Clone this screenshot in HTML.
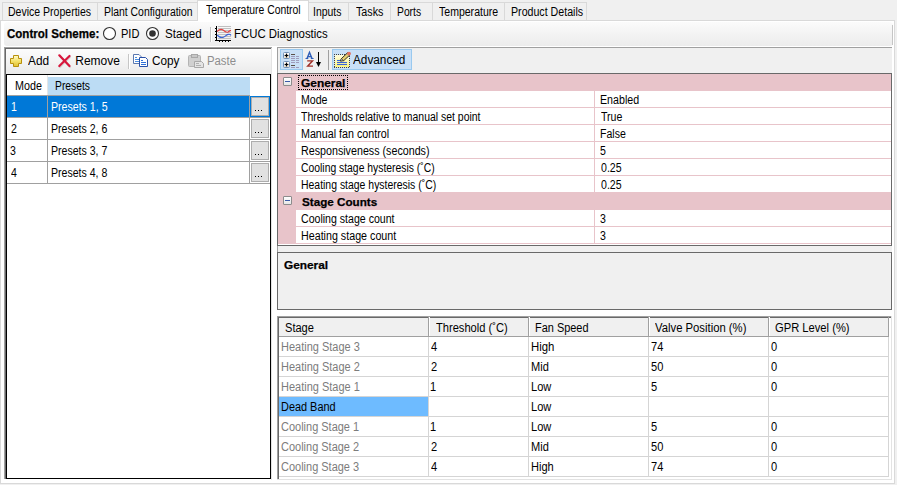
<!DOCTYPE html>
<html><head><meta charset="utf-8"><style>
html,body{margin:0;padding:0;width:897px;height:485px;overflow:hidden;background:#f0f0f0;position:relative}
body>div{position:absolute}
.t{font-family:"Liberation Sans",sans-serif;white-space:pre;transform-origin:0 0}
</style></head><body>
<div style="left:2px;top:2px;width:96px;height:19px;background:#f0f0f0;border:1px solid #d9d9d9;box-sizing:border-box;border-bottom:none"></div>
<div style="left:97px;top:2px;width:101px;height:19px;background:#f0f0f0;border:1px solid #d9d9d9;box-sizing:border-box;border-bottom:none"></div>
<div style="left:308px;top:2px;width:41px;height:19px;background:#f0f0f0;border:1px solid #d9d9d9;box-sizing:border-box;border-bottom:none"></div>
<div style="left:348px;top:2px;width:43px;height:19px;background:#f0f0f0;border:1px solid #d9d9d9;box-sizing:border-box;border-bottom:none"></div>
<div style="left:390px;top:2px;width:43px;height:19px;background:#f0f0f0;border:1px solid #d9d9d9;box-sizing:border-box;border-bottom:none"></div>
<div style="left:432px;top:2px;width:73px;height:19px;background:#f0f0f0;border:1px solid #d9d9d9;box-sizing:border-box;border-bottom:none"></div>
<div style="left:504px;top:2px;width:83px;height:19px;background:#f0f0f0;border:1px solid #d9d9d9;box-sizing:border-box;border-bottom:none"></div>
<div style="left:0px;top:20px;width:895px;height:464px;background:#fff;border:1px solid #d9d9d9;box-sizing:border-box"></div>
<div style="left:197px;top:0px;width:112px;height:21px;background:#fff;border:1px solid #d9d9d9;border-bottom:none;box-sizing:border-box"></div>
<div style="left:4px;top:22px;width:889px;height:24px;background:linear-gradient(#fbfbfb,#f3f3f3 50%,#ececec);border-radius:3px"></div>
<div style="left:892px;top:25px;width:1px;height:20px;background:#c5c5c5"></div>
<div style="left:210px;top:27px;width:1px;height:15px;background:#c6c6c6"></div>
<div style="left:211px;top:28px;width:1px;height:14px;background:#ffffff"></div>
<div style="left:4px;top:47px;width:268px;height:1px;background:#a0a0a0"></div>
<div style="left:4px;top:47px;width:1px;height:433px;background:#a0a0a0"></div>
<div style="left:5px;top:48px;width:266px;height:1px;background:#696969"></div>
<div style="left:5px;top:48px;width:1px;height:431px;background:#696969"></div>
<div style="left:4px;top:479px;width:269px;height:1px;background:#ffffff"></div>
<div style="left:271px;top:48px;width:1px;height:432px;background:#e3e3e3"></div>
<div style="left:6px;top:49px;width:265px;height:25px;background:linear-gradient(#fcfcfc,#f2f2f2 60%,#eaeaea)"></div>
<div style="left:128px;top:54px;width:1px;height:15px;background:#c6c6c6"></div>
<div style="left:129px;top:55px;width:1px;height:14px;background:#ffffff"></div>
<div style="left:6px;top:74px;width:265px;height:405px;background:#fff;border:1px solid #000;box-sizing:border-box"></div>
<div style="left:48px;top:77px;width:202px;height:18px;background:#bcdcf4"></div>
<div style="left:7px;top:95px;width:243px;height:1px;background:#a0a0a0"></div>
<div style="left:47px;top:75px;width:1px;height:20px;background:#e5e5e5"></div>
<div style="left:7px;top:96px;width:243px;height:21px;background:#0078d7"></div>
<div style="left:250px;top:96px;width:20px;height:21px;background:#0078d7"></div>
<div style="left:7px;top:117px;width:263px;height:1px;background:#a0a0a0"></div>
<div style="left:7px;top:139px;width:263px;height:1px;background:#a0a0a0"></div>
<div style="left:7px;top:161px;width:263px;height:1px;background:#a0a0a0"></div>
<div style="left:7px;top:183px;width:263px;height:1px;background:#a0a0a0"></div>
<div style="left:47px;top:96px;width:1px;height:88px;background:#a0a0a0"></div>
<div style="left:249px;top:96px;width:1px;height:88px;background:#a0a0a0"></div>
<div style="left:251px;top:97px;width:18px;height:19px;background:#e1e1e1;border:1px solid #adadad;box-sizing:border-box"></div>
<div style="left:255px;top:110px;width:1px;height:1px;background:#000"></div>
<div style="left:258px;top:110px;width:1px;height:1px;background:#000"></div>
<div style="left:261px;top:110px;width:1px;height:1px;background:#000"></div>
<div style="left:251px;top:119px;width:18px;height:19px;background:#e1e1e1;border:1px solid #adadad;box-sizing:border-box"></div>
<div style="left:255px;top:132px;width:1px;height:1px;background:#000"></div>
<div style="left:258px;top:132px;width:1px;height:1px;background:#000"></div>
<div style="left:261px;top:132px;width:1px;height:1px;background:#000"></div>
<div style="left:251px;top:141px;width:18px;height:19px;background:#e1e1e1;border:1px solid #adadad;box-sizing:border-box"></div>
<div style="left:255px;top:154px;width:1px;height:1px;background:#000"></div>
<div style="left:258px;top:154px;width:1px;height:1px;background:#000"></div>
<div style="left:261px;top:154px;width:1px;height:1px;background:#000"></div>
<div style="left:251px;top:163px;width:18px;height:19px;background:#e1e1e1;border:1px solid #adadad;box-sizing:border-box"></div>
<div style="left:255px;top:176px;width:1px;height:1px;background:#000"></div>
<div style="left:258px;top:176px;width:1px;height:1px;background:#000"></div>
<div style="left:261px;top:176px;width:1px;height:1px;background:#000"></div>
<div style="left:277px;top:47px;width:615px;height:263px;background:#f0f0f0"></div>
<div style="left:277px;top:47px;width:615px;height:1px;background:#a0a0a0"></div>
<div style="left:277px;top:47px;width:1px;height:263px;background:#a0a0a0"></div>
<div style="left:280px;top:49px;width:23px;height:21px;background:#c9e0f7;border:1px solid #99c9ef;box-sizing:border-box"></div>
<div style="left:328px;top:50px;width:1px;height:20px;background:#a0a0a0"></div>
<div style="left:332px;top:49px;width:80px;height:21px;background:#c9e0f7;border:1px solid #99c9ef;box-sizing:border-box"></div>
<div style="left:277px;top:73px;width:615px;height:173px;background:#e8c4ca;border:1px solid #696969;box-sizing:border-box"></div>
<div style="left:296px;top:91px;width:595px;height:16px;background:#fff"></div>
<div style="left:296px;top:108px;width:595px;height:16px;background:#fff"></div>
<div style="left:296px;top:125px;width:595px;height:16px;background:#fff"></div>
<div style="left:296px;top:142px;width:595px;height:16px;background:#fff"></div>
<div style="left:296px;top:159px;width:595px;height:16px;background:#fff"></div>
<div style="left:296px;top:176px;width:595px;height:16px;background:#fff"></div>
<div style="left:296px;top:210px;width:595px;height:16px;background:#fff"></div>
<div style="left:296px;top:227px;width:595px;height:16px;background:#fff"></div>
<div style="left:278px;top:244px;width:613px;height:1px;background:#ffffff"></div>
<div style="left:594px;top:91px;width:1px;height:16px;background:#e8c4ca"></div>
<div style="left:594px;top:108px;width:1px;height:16px;background:#e8c4ca"></div>
<div style="left:594px;top:125px;width:1px;height:16px;background:#e8c4ca"></div>
<div style="left:594px;top:142px;width:1px;height:16px;background:#e8c4ca"></div>
<div style="left:594px;top:159px;width:1px;height:16px;background:#e8c4ca"></div>
<div style="left:594px;top:176px;width:1px;height:16px;background:#e8c4ca"></div>
<div style="left:594px;top:210px;width:1px;height:16px;background:#e8c4ca"></div>
<div style="left:594px;top:227px;width:1px;height:16px;background:#e8c4ca"></div>
<div style="left:283px;top:77px;width:9px;height:9px;background:linear-gradient(#fff,#e6e6e6);border:1px solid #8c8c8c;border-radius:1px;box-sizing:border-box"></div>
<div style="left:285px;top:81px;width:5px;height:1px;background:#3a5aa8"></div>
<div style="left:283px;top:196px;width:9px;height:9px;background:linear-gradient(#fff,#e6e6e6);border:1px solid #8c8c8c;border-radius:1px;box-sizing:border-box"></div>
<div style="left:285px;top:200px;width:5px;height:1px;background:#3a5aa8"></div>
<div style="left:298px;top:75px;width:50px;height:15px;border:1px dotted #000;box-sizing:border-box"></div>
<div style="left:277px;top:252px;width:615px;height:58px;background:#f0f0f0;border:1px solid #696969;box-sizing:border-box"></div>
<div style="left:277px;top:316px;width:615px;height:164px;background:#fff"></div>
<div style="left:277px;top:316px;width:615px;height:1px;background:#a0a0a0"></div>
<div style="left:277px;top:316px;width:1px;height:164px;background:#a0a0a0"></div>
<div style="left:278px;top:317px;width:613px;height:1px;background:#696969"></div>
<div style="left:278px;top:317px;width:1px;height:162px;background:#696969"></div>
<div style="left:279px;top:318px;width:610px;height:18px;background:#f0f0f0"></div>
<div style="left:279px;top:336px;width:610px;height:1px;background:#a0a0a0"></div>
<div style="left:428px;top:317px;width:1px;height:19px;background:#a0a0a0"></div>
<div style="left:429px;top:317px;width:1px;height:19px;background:#ffffff"></div>
<div style="left:528px;top:317px;width:1px;height:19px;background:#a0a0a0"></div>
<div style="left:529px;top:317px;width:1px;height:19px;background:#ffffff"></div>
<div style="left:648px;top:317px;width:1px;height:19px;background:#a0a0a0"></div>
<div style="left:649px;top:317px;width:1px;height:19px;background:#ffffff"></div>
<div style="left:768px;top:317px;width:1px;height:19px;background:#a0a0a0"></div>
<div style="left:769px;top:317px;width:1px;height:19px;background:#ffffff"></div>
<div style="left:888px;top:317px;width:1px;height:20px;background:#a0a0a0"></div>
<div style="left:279px;top:356px;width:610px;height:1px;background:#d5d5d5"></div>
<div style="left:279px;top:376px;width:610px;height:1px;background:#d5d5d5"></div>
<div style="left:279px;top:396px;width:610px;height:1px;background:#d5d5d5"></div>
<div style="left:279px;top:416px;width:610px;height:1px;background:#d5d5d5"></div>
<div style="left:279px;top:436px;width:610px;height:1px;background:#d5d5d5"></div>
<div style="left:279px;top:456px;width:610px;height:1px;background:#d5d5d5"></div>
<div style="left:279px;top:476px;width:610px;height:1px;background:#d5d5d5"></div>
<div style="left:428px;top:337px;width:1px;height:140px;background:#d5d5d5"></div>
<div style="left:528px;top:337px;width:1px;height:140px;background:#d5d5d5"></div>
<div style="left:648px;top:337px;width:1px;height:140px;background:#d5d5d5"></div>
<div style="left:768px;top:337px;width:1px;height:140px;background:#d5d5d5"></div>
<div style="left:888px;top:337px;width:1px;height:140px;background:#d5d5d5"></div>
<div style="left:279px;top:397px;width:149px;height:19px;background:#6ebbff"></div>
<div style="left:277px;top:479px;width:615px;height:1px;background:#e3e3e3"></div>
<div style="left:891px;top:316px;width:1px;height:164px;background:#e3e3e3"></div>
<svg style="position:absolute;left:0;top:0" width="897" height="485" viewBox="0 0 897 485">
<defs>
<linearGradient id="gy" x1="0" y1="0" x2="0" y2="1"><stop offset="0" stop-color="#fffbd0"/><stop offset="0.5" stop-color="#f4e26a"/><stop offset="1" stop-color="#e0c030"/></linearGradient>
<linearGradient id="gtan" x1="0" y1="0" x2="0" y2="1"><stop offset="0" stop-color="#ffffff"/><stop offset="0.6" stop-color="#fdfbf7"/><stop offset="1" stop-color="#e0d0b4"/></linearGradient>
<linearGradient id="gnote" x1="0" y1="0" x2="0" y2="1"><stop offset="0" stop-color="#fffde0"/><stop offset="1" stop-color="#fff880"/></linearGradient>
</defs>
<!-- radio buttons -->
<circle cx="109.5" cy="33.5" r="6" fill="#fff" stroke="#333" stroke-width="1.1"/>
<circle cx="152.5" cy="33.5" r="6" fill="#fff" stroke="#333" stroke-width="1.1"/>
<circle cx="152.5" cy="33.5" r="3.3" fill="#333"/>
<!-- FCUC chart icon -->
<g>
<g stroke="#c0c0c0" stroke-width="1">
<line x1="218" y1="26.5" x2="231" y2="26.5"/><line x1="218" y1="28.5" x2="231" y2="28.5"/>
<line x1="218" y1="30.5" x2="231" y2="30.5"/><line x1="218" y1="32.5" x2="231" y2="32.5"/>
<line x1="218" y1="34.5" x2="231" y2="34.5"/><line x1="218" y1="36.5" x2="231" y2="36.5"/>
<line x1="218" y1="38.5" x2="231" y2="38.5"/>
</g>
<path d="M217,31.5 C219.5,29 221.5,28.8 223,30 C225,31.8 226.5,33 228,32 C229,31.3 230,30.6 231,30.4" fill="none" stroke="#e04040" stroke-width="1.2"/>
<path d="M217,35 C219,37 221,37.8 223,37.4 C225,37 226,35 228,34.4 C229.5,34 230.5,34.6 231,35.4" fill="none" stroke="#3a64d8" stroke-width="1.2"/>
<line x1="216.5" y1="26" x2="216.5" y2="41" stroke="#000" stroke-width="1"/>
<line x1="216" y1="40.5" x2="231" y2="40.5" stroke="#000" stroke-width="1"/>
<g fill="#000"><rect x="215" y="28" width="1" height="1"/><rect x="215" y="31" width="1" height="1"/><rect x="215" y="34" width="1" height="1"/><rect x="215" y="37" width="1" height="1"/><rect x="215" y="40" width="1" height="1"/>
<rect x="219" y="41" width="1" height="1"/><rect x="222" y="41" width="1" height="1"/><rect x="225" y="41" width="1" height="1"/><rect x="228" y="41" width="1" height="1"/></g>
</g>
<!-- Add (plus) icon -->
<path d="M13.5,55.5 H18.5 V58.5 H21.5 V63.5 H18.5 V66.5 H13.5 V63.5 H10.5 V58.5 H13.5 Z" fill="url(#gy)" stroke="#b8900c" stroke-width="1"/>
<!-- Remove (X) icon -->
<g stroke="#9a9a9a" stroke-opacity="0.3" stroke-width="2.2" stroke-linecap="round"><line x1="60" y1="56" x2="70" y2="67"/><line x1="70" y1="57" x2="60" y2="67"/></g>
<g stroke="#d8163c" stroke-width="2.2" stroke-linecap="round"><line x1="59.3" y1="55.3" x2="69.5" y2="66"/><line x1="69.5" y1="56" x2="59.3" y2="66"/></g>
<!-- Copy icon -->
<path d="M133.5,54.5 H139 L141.5,57 V63.5 H133.5 Z" fill="#fff" stroke="#5a78b0" stroke-width="1"/>
<g stroke="#4a8ee0" stroke-width="1"><line x1="135" y1="57.5" x2="137" y2="57.5"/><line x1="135" y1="59.5" x2="140" y2="59.5"/><line x1="135" y1="61.5" x2="140" y2="61.5"/></g>
<path d="M139.5,57.5 H145.5 L147.5,59.5 V66.5 H139.5 Z" fill="#fff" stroke="#2850a8" stroke-width="1"/>
<g stroke="#3070d8" stroke-width="1"><line x1="141" y1="60.5" x2="143" y2="60.5"/><line x1="141" y1="62.5" x2="146" y2="62.5"/><line x1="141" y1="64.5" x2="146" y2="64.5"/></g>
<!-- Paste icon (disabled) -->
<rect x="188.5" y="55.5" width="12" height="11" rx="1" fill="#d0d0d0" stroke="#b4b4b4"/>
<rect x="191.5" y="54.5" width="6" height="3" fill="#c8c8c8" stroke="#a8a8a8"/>
<path d="M194.5,61.5 H201.5 L203.5,63.5 V67.5 H194.5 Z" fill="#e4e4e4" stroke="#a8a8a8"/>
<g stroke="#b0b0b0"><line x1="196" y1="63.5" x2="199" y2="63.5"/><line x1="196" y1="65.5" x2="201" y2="65.5"/></g>
<!-- categorized icon -->
<g>
<rect x="283.5" y="52.5" width="6" height="6" rx="1" fill="url(#gtan)" stroke="#7090b8"/>
<rect x="283.5" y="61.5" width="6" height="6" rx="1" fill="url(#gtan)" stroke="#7090b8"/>
<g stroke="#000" stroke-width="1.2"><line x1="284.6" y1="55.5" x2="288.4" y2="55.5"/><line x1="286.5" y1="53.6" x2="286.5" y2="57.4"/>
<line x1="284.6" y1="64.5" x2="288.4" y2="64.5"/><line x1="286.5" y1="62.6" x2="286.5" y2="66.4"/></g>
<g stroke="#5a5048" stroke-width="1"><line x1="291" y1="54.5" x2="295" y2="54.5"/><line x1="291" y1="65.5" x2="295" y2="65.5"/></g>
<g stroke="#9a94b4" stroke-width="0.9">
<line x1="291" y1="56.5" x2="295" y2="56.5"/><line x1="296" y1="56.5" x2="299" y2="56.5"/>
<line x1="291" y1="58.5" x2="295" y2="58.5"/><line x1="296" y1="58.5" x2="299" y2="58.5"/>
<line x1="291" y1="60.5" x2="295" y2="60.5"/><line x1="296" y1="60.5" x2="299" y2="60.5"/>
<line x1="291" y1="62.5" x2="295" y2="62.5"/><line x1="296" y1="62.5" x2="299" y2="62.5"/>
<line x1="291" y1="67.5" x2="295" y2="67.5"/><line x1="296" y1="67.5" x2="299" y2="67.5"/>
</g>
</g>
<!-- AZ icon -->
<g fill="none" stroke="#2f5fb8" stroke-width="1.4"><path d="M306.8,59 L309.5,52.3 L312.2,59"/><line x1="307.8" y1="56.6" x2="311.2" y2="56.6"/></g>
<g stroke="#2f5fb8" stroke-width="1"><line x1="305.5" y1="58.5" x2="308.3" y2="58.5"/><line x1="310.8" y1="58.5" x2="313.6" y2="58.5"/></g>
<g fill="none" stroke="#a03028" stroke-width="1.3"><path d="M307.2,60.8 H312.6 L307.6,66.2 H313"/></g>
<line x1="318.5" y1="52" x2="318.5" y2="64" stroke="#000" stroke-width="1"/>
<path d="M316,62 L321,62 L318.5,67 Z" fill="#000"/>
<!-- Advanced icon -->
<rect x="335" y="55" width="14" height="12" fill="url(#gnote)"/>
<g fill="#404040"><rect x="334" y="54" width="1" height="1"/><rect x="334" y="67" width="1" height="1"/><rect x="336" y="54" width="1" height="1"/><rect x="336" y="67" width="1" height="1"/><rect x="338" y="54" width="1" height="1"/><rect x="338" y="67" width="1" height="1"/><rect x="340" y="54" width="1" height="1"/><rect x="340" y="67" width="1" height="1"/><rect x="342" y="54" width="1" height="1"/><rect x="342" y="67" width="1" height="1"/><rect x="344" y="54" width="1" height="1"/><rect x="344" y="67" width="1" height="1"/><rect x="346" y="54" width="1" height="1"/><rect x="346" y="67" width="1" height="1"/><rect x="348" y="54" width="1" height="1"/><rect x="348" y="67" width="1" height="1"/><rect x="334" y="56" width="1" height="1"/><rect x="349" y="56" width="1" height="1"/><rect x="334" y="58" width="1" height="1"/><rect x="349" y="58" width="1" height="1"/><rect x="334" y="60" width="1" height="1"/><rect x="349" y="60" width="1" height="1"/><rect x="334" y="62" width="1" height="1"/><rect x="349" y="62" width="1" height="1"/><rect x="334" y="64" width="1" height="1"/><rect x="349" y="64" width="1" height="1"/><rect x="334" y="66" width="1" height="1"/><rect x="349" y="66" width="1" height="1"/></g>
<g stroke="#3a64d8" stroke-width="1.1"><line x1="337" y1="60.5" x2="341" y2="60.5"/><line x1="337" y1="62.5" x2="347" y2="62.5"/><line x1="337" y1="64.5" x2="347" y2="64.5"/></g>
<path d="M340.5,61 L341.5,58.5 L347.5,52.8 L349.8,55 L343.8,60.6 Z" fill="#e6cf70" stroke="#1a1a1a" stroke-width="0.9"/>
<path d="M340.5,61 L341.5,58.5 L343.3,60.4 Z" fill="#fff" stroke="#1a1a1a" stroke-width="0.6"/>
<circle cx="349" cy="53.6" r="1.9" fill="#e07060"/>
</svg>
<div class="t" style="left:7.75px;top:4px;font-size:12px;line-height:16px;color:#000;transform:scaleX(0.877)">Device Properties</div>
<div class="t" style="left:103.5px;top:4px;font-size:12px;line-height:16px;color:#000;transform:scaleX(0.867)">Plant Configuration</div>
<div class="t" style="left:205.75px;top:2px;font-size:12px;line-height:16px;color:#000;transform:scaleX(0.865)">Temperature Control</div>
<div class="t" style="left:312.5px;top:4px;font-size:12px;line-height:16px;color:#000;transform:scaleX(0.869)">Inputs</div>
<div class="t" style="left:355.5px;top:4px;font-size:12px;line-height:16px;color:#000;transform:scaleX(0.894)">Tasks</div>
<div class="t" style="left:396.5px;top:4px;font-size:12px;line-height:16px;color:#000;transform:scaleX(0.859)">Ports</div>
<div class="t" style="left:439.25px;top:4px;font-size:12px;line-height:16px;color:#000;transform:scaleX(0.878)">Temperature</div>
<div class="t" style="left:510.5px;top:4px;font-size:12px;line-height:16px;color:#000;transform:scaleX(0.886)">Product Details</div>
<div class="t" style="left:7.0px;top:26px;font-size:12px;line-height:16px;color:#000;font-weight:700;-webkit-text-stroke:0.25px #000;transform:scaleX(0.961)">Control Scheme:</div>
<div class="t" style="left:121.0px;top:26px;font-size:12px;line-height:16px;color:#000;transform:scaleX(0.921)">PID</div>
<div class="t" style="left:164.5px;top:26px;font-size:12px;line-height:16px;color:#000;transform:scaleX(0.967)">Staged</div>
<div class="t" style="left:233.75px;top:26px;font-size:12px;line-height:16px;color:#000;transform:scaleX(0.949)">FCUC Diagnostics</div>
<div class="t" style="left:27.5px;top:53px;font-size:12px;line-height:16px;color:#000;transform:scaleX(0.986)">Add</div>
<div class="t" style="left:75.25px;top:53px;font-size:12px;line-height:16px;color:#000">Remove</div>
<div class="t" style="left:152.0px;top:53px;font-size:12px;line-height:16px;color:#000;transform:scaleX(0.982)">Copy</div>
<div class="t" style="left:206.75px;top:53px;font-size:12px;line-height:16px;color:#8d8d8d;transform:scaleX(0.945)">Paste</div>
<div class="t" style="left:15.0px;top:78px;font-size:12px;line-height:16px;color:#000;transform:scaleX(0.897)">Mode</div>
<div class="t" style="left:55.0px;top:78px;font-size:12px;line-height:16px;color:#000;transform:scaleX(0.860)">Presets</div>
<div class="t" style="left:11.0px;top:99px;font-size:12px;line-height:16px;color:#fff;transform:scaleX(0.880)">1</div>
<div class="t" style="left:50.5px;top:99px;font-size:12px;line-height:16px;color:#fff;transform:scaleX(0.883)">Presets 1, 5</div>
<div class="t" style="left:11.0px;top:121px;font-size:12px;line-height:16px;color:#000;transform:scaleX(0.880)">2</div>
<div class="t" style="left:50.5px;top:121px;font-size:12px;line-height:16px;color:#000;transform:scaleX(0.880)">Presets 2, 6</div>
<div class="t" style="left:10.0px;top:143px;font-size:12px;line-height:16px;color:#000;transform:scaleX(0.880)">3</div>
<div class="t" style="left:50.5px;top:143px;font-size:12px;line-height:16px;color:#000;transform:scaleX(0.880)">Presets 3, 7</div>
<div class="t" style="left:11.0px;top:165px;font-size:12px;line-height:16px;color:#000;transform:scaleX(0.880)">4</div>
<div class="t" style="left:50.5px;top:165px;font-size:12px;line-height:16px;color:#000;transform:scaleX(0.880)">Presets 4, 8</div>
<div class="t" style="left:353.0px;top:52px;font-size:12px;line-height:16px;color:#000;transform:scaleX(0.981)">Advanced</div>
<div class="t" style="left:300.5px;top:76px;font-size:11.5px;line-height:15.5px;color:#000;font-weight:700;-webkit-text-stroke:0.25px #000;transform:scaleX(1.036)">General</div>
<div class="t" style="left:300.5px;top:92px;font-size:12px;line-height:16px;color:#000;transform:scaleX(0.881)">Mode</div>
<div class="t" style="left:599.5px;top:92px;font-size:12px;line-height:16px;color:#000;transform:scaleX(0.888)">Enabled</div>
<div class="t" style="left:301.25px;top:109px;font-size:12px;line-height:16px;color:#000;transform:scaleX(0.871)">Thresholds relative to manual set point</div>
<div class="t" style="left:600.5px;top:109px;font-size:12px;line-height:16px;color:#000;transform:scaleX(0.881)">True</div>
<div class="t" style="left:300.5px;top:126px;font-size:12px;line-height:16px;color:#000;transform:scaleX(0.892)">Manual fan control</div>
<div class="t" style="left:599.5px;top:126px;font-size:12px;line-height:16px;color:#000;transform:scaleX(0.881)">False</div>
<div class="t" style="left:300.5px;top:143px;font-size:12px;line-height:16px;color:#000;transform:scaleX(0.892)">Responsiveness (seconds)</div>
<div class="t" style="left:599.5px;top:143px;font-size:12px;line-height:16px;color:#000;transform:scaleX(0.881)">5</div>
<div class="t" style="left:301.25px;top:160px;font-size:12px;line-height:16px;color:#000;transform:scaleX(0.864)">Cooling stage hysteresis (˚C)</div>
<div class="t" style="left:600.5px;top:160px;font-size:12px;line-height:16px;color:#000;transform:scaleX(0.881)">0.25</div>
<div class="t" style="left:300.5px;top:177px;font-size:12px;line-height:16px;color:#000;transform:scaleX(0.870)">Heating stage hysteresis (˚C)</div>
<div class="t" style="left:600.5px;top:177px;font-size:12px;line-height:16px;color:#000;transform:scaleX(0.881)">0.25</div>
<div class="t" style="left:301.5px;top:195px;font-size:11.5px;line-height:15.5px;color:#000;font-weight:700;-webkit-text-stroke:0.25px #000;transform:scaleX(1.014)">Stage Counts</div>
<div class="t" style="left:301.25px;top:211px;font-size:12px;line-height:16px;color:#000;transform:scaleX(0.882)">Cooling stage count</div>
<div class="t" style="left:599.5px;top:211px;font-size:12px;line-height:16px;color:#000;transform:scaleX(0.881)">3</div>
<div class="t" style="left:300.5px;top:228px;font-size:12px;line-height:16px;color:#000;transform:scaleX(0.892)">Heating stage count</div>
<div class="t" style="left:599.5px;top:228px;font-size:12px;line-height:16px;color:#000;transform:scaleX(0.881)">3</div>
<div class="t" style="left:284.0px;top:258px;font-size:11.5px;line-height:15.5px;color:#000;font-weight:700;-webkit-text-stroke:0.25px #000;transform:scaleX(1.029)">General</div>
<div class="t" style="left:284.5px;top:320px;font-size:12px;line-height:16px;color:#000;transform:scaleX(0.923)">Stage</div>
<div class="t" style="left:436.0px;top:320px;font-size:12px;line-height:16px;color:#000;transform:scaleX(0.927)">Threshold (˚C)</div>
<div class="t" style="left:534.75px;top:320px;font-size:12px;line-height:16px;color:#000;transform:scaleX(0.912)">Fan Speed</div>
<div class="t" style="left:655.0px;top:320px;font-size:12px;line-height:16px;color:#000;transform:scaleX(0.941)">Valve Position (%)</div>
<div class="t" style="left:774.5px;top:320px;font-size:12px;line-height:16px;color:#000;transform:scaleX(0.932)">GPR Level (%)</div>
<div class="t" style="left:280.75px;top:339px;font-size:12px;line-height:16px;color:#7c7c7c;transform:scaleX(0.915)">Heating Stage 3</div>
<div class="t" style="left:431.25px;top:339px;font-size:12px;line-height:16px;color:#000;transform:scaleX(0.922)">4</div>
<div class="t" style="left:530.5px;top:339px;font-size:12px;line-height:16px;color:#000;transform:scaleX(0.948)">High</div>
<div class="t" style="left:650.5px;top:339px;font-size:12px;line-height:16px;color:#000;transform:scaleX(0.922)">74</div>
<div class="t" style="left:771.25px;top:339px;font-size:12px;line-height:16px;color:#000;transform:scaleX(0.922)">0</div>
<div class="t" style="left:280.75px;top:359px;font-size:12px;line-height:16px;color:#7c7c7c;transform:scaleX(0.915)">Heating Stage 2</div>
<div class="t" style="left:431.25px;top:359px;font-size:12px;line-height:16px;color:#000;transform:scaleX(0.922)">2</div>
<div class="t" style="left:530.5px;top:359px;font-size:12px;line-height:16px;color:#000;transform:scaleX(0.922)">Mid</div>
<div class="t" style="left:650.5px;top:359px;font-size:12px;line-height:16px;color:#000;transform:scaleX(0.922)">50</div>
<div class="t" style="left:771.25px;top:359px;font-size:12px;line-height:16px;color:#000;transform:scaleX(0.922)">0</div>
<div class="t" style="left:280.75px;top:379px;font-size:12px;line-height:16px;color:#7c7c7c;transform:scaleX(0.915)">Heating Stage 1</div>
<div class="t" style="left:430.25px;top:379px;font-size:12px;line-height:16px;color:#000;transform:scaleX(0.922)">1</div>
<div class="t" style="left:530.5px;top:379px;font-size:12px;line-height:16px;color:#000;transform:scaleX(0.922)">Low</div>
<div class="t" style="left:650.5px;top:379px;font-size:12px;line-height:16px;color:#000;transform:scaleX(0.922)">5</div>
<div class="t" style="left:771.25px;top:379px;font-size:12px;line-height:16px;color:#000;transform:scaleX(0.922)">0</div>
<div class="t" style="left:280.75px;top:399px;font-size:12px;line-height:16px;color:#000;transform:scaleX(0.909)">Dead Band</div>
<div class="t" style="left:530.5px;top:399px;font-size:12px;line-height:16px;color:#000;transform:scaleX(0.922)">Low</div>
<div class="t" style="left:281.0px;top:419px;font-size:12px;line-height:16px;color:#7c7c7c;transform:scaleX(0.915)">Cooling Stage 1</div>
<div class="t" style="left:430.25px;top:419px;font-size:12px;line-height:16px;color:#000;transform:scaleX(0.922)">1</div>
<div class="t" style="left:530.5px;top:419px;font-size:12px;line-height:16px;color:#000;transform:scaleX(0.922)">Low</div>
<div class="t" style="left:650.5px;top:419px;font-size:12px;line-height:16px;color:#000;transform:scaleX(0.922)">5</div>
<div class="t" style="left:771.25px;top:419px;font-size:12px;line-height:16px;color:#000;transform:scaleX(0.922)">0</div>
<div class="t" style="left:281.0px;top:439px;font-size:12px;line-height:16px;color:#7c7c7c;transform:scaleX(0.915)">Cooling Stage 2</div>
<div class="t" style="left:431.25px;top:439px;font-size:12px;line-height:16px;color:#000;transform:scaleX(0.922)">2</div>
<div class="t" style="left:530.5px;top:439px;font-size:12px;line-height:16px;color:#000;transform:scaleX(0.922)">Mid</div>
<div class="t" style="left:650.5px;top:439px;font-size:12px;line-height:16px;color:#000;transform:scaleX(0.922)">50</div>
<div class="t" style="left:771.25px;top:439px;font-size:12px;line-height:16px;color:#000;transform:scaleX(0.922)">0</div>
<div class="t" style="left:281.0px;top:459px;font-size:12px;line-height:16px;color:#7c7c7c;transform:scaleX(0.915)">Cooling Stage 3</div>
<div class="t" style="left:431.25px;top:459px;font-size:12px;line-height:16px;color:#000;transform:scaleX(0.922)">4</div>
<div class="t" style="left:530.5px;top:459px;font-size:12px;line-height:16px;color:#000;transform:scaleX(0.922)">High</div>
<div class="t" style="left:650.5px;top:459px;font-size:12px;line-height:16px;color:#000;transform:scaleX(0.922)">74</div>
<div class="t" style="left:771.25px;top:459px;font-size:12px;line-height:16px;color:#000;transform:scaleX(0.922)">0</div>
</body></html>
